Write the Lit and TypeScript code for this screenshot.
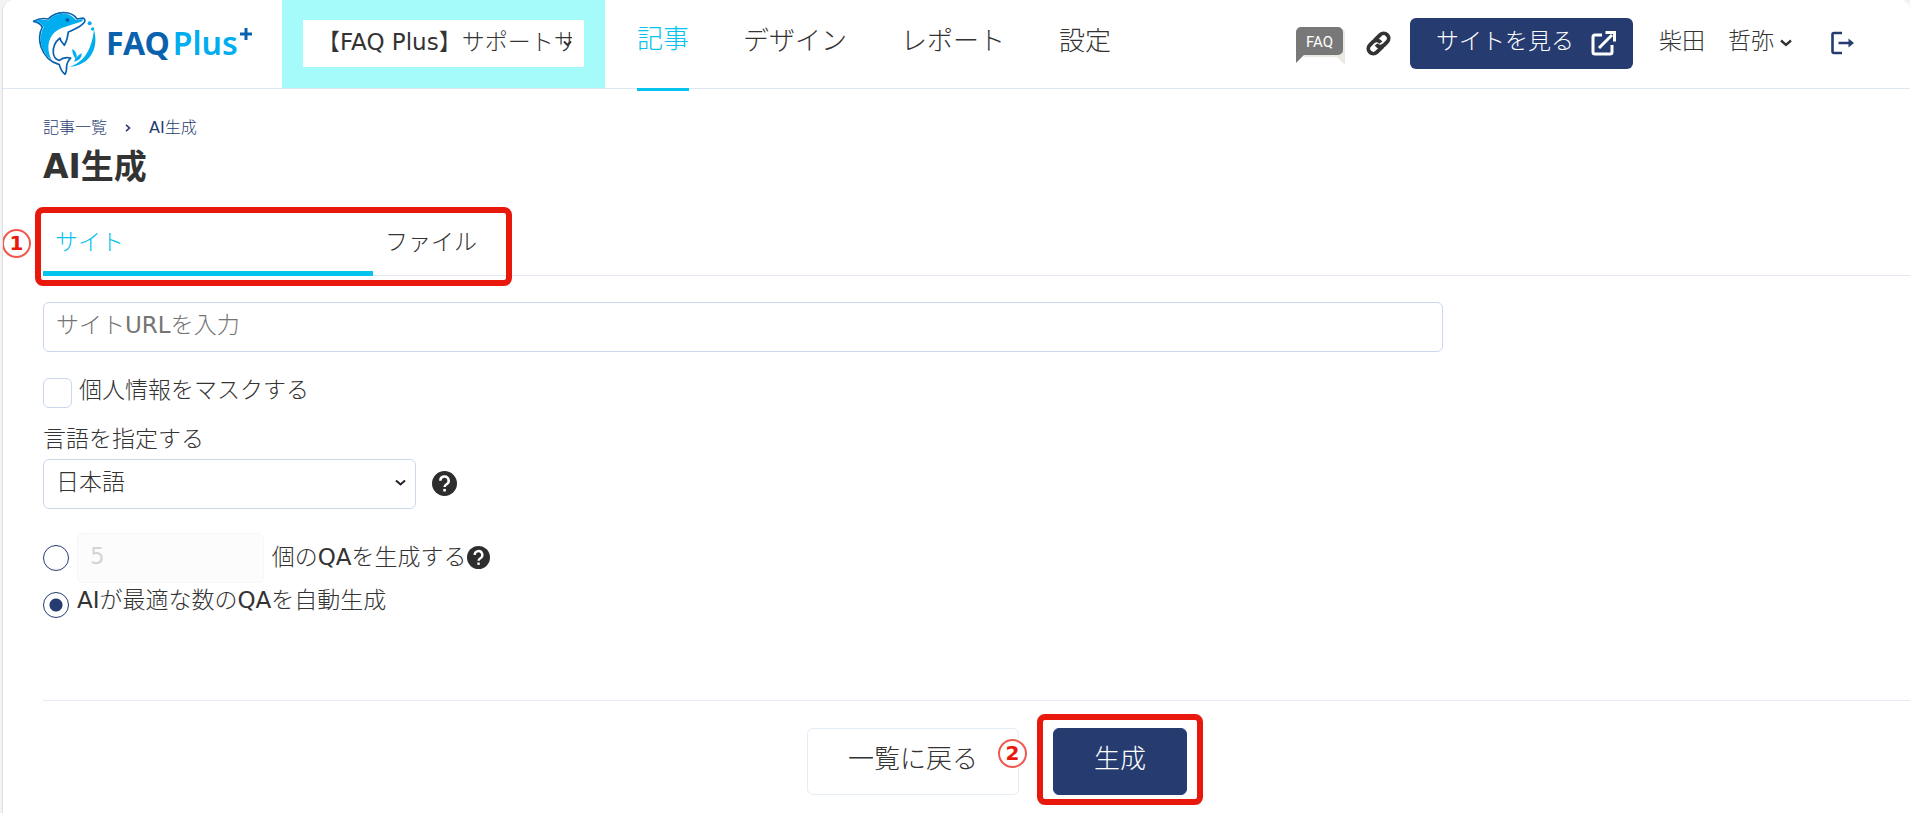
import { LitElement, html, css, svg } from "lit";
import { customElement, state } from "lit/decorators.js";

const helpIcon = svg`
  <circle cx="12" cy="12" r="12" fill="#2d2d2d" />
  <path d="M8 9.4a4 4 0 1 1 6 3.3c-1.3.8-1.9 1.300-1.900 2.600" fill="none" stroke="#fff" stroke-width="2.400" />
  <rect x="10.800" y="17.200" width="2.500" height="2.500" fill="#fff" />`;

@customElement("app-logo")
export class AppLogo extends LitElement {
  static styles = css`
    :host { display: block; }
    .logo { display: flex; align-items: center; text-decoration: none; }
    .mark { width: 68px; height: 68px; flex: none; }
    .name {
      display: flex;
      margin-left: 8px;
      font: 700 32px/44px "Noto Sans", sans-serif;
      color: #0a62ae;
    }
    .plus { margin-left: 3px; font-weight: 600; color: #00adee; }
    .sup { width: 14px; height: 14px; margin: 6px 0 0 1px; }
  `;

  render() {
    return html`
      <a class="logo" href="#" aria-label="FAQPlus+">
        <svg class="mark" viewBox="90 30 204 204" aria-hidden="true">
          <path d="M282 92C298 150 268 200 208 203C246 192 274 160 282 92Z" fill="#00adee" />
          <path d="M101 67C116 58 130 57 145 60C160 44 182 38 204 42C218 45 226 52 231 60L249 57C257 60 256 68 250 73C238 86 220 92 205 99C203 117 200 127 193 139L183 126L180 117C166 128 158 145 160 163C162 175 168 182 178 184C187 176 198 174 212 177C206 184 200 190 200 202C200 212 199 220 195 226C186 219 181 209 178 197C152 189 132 170 123 143C117 124 118 102 127 84C121 74 112 69 101 67Z"
            fill="#fff" stroke="#0a62ae" stroke-width="5" stroke-linejoin="round" />
          <path d="M106 66C121 61 133 61 146 64C160 46 184 41 204 46C216 50 222 57 228 64L246 60C251 62 249 66 243 68C224 74 205 80 187 86C160 96 145 118 145 147C146 160 149 172 155 182C137 170 129 154 124 138C120 118 122 101 131 84C125 74 117 69 106 66Z" fill="#00adee" />
          <circle cx="202" cy="63" r="6" fill="#0a62ae" />
          <circle cx="269" cy="73" r="6" fill="#00adee" />
          <circle cx="278" cy="90" r="5" fill="#00adee" />
          <path d="M217 149C230 159 233 171 227 180C220 170 216 160 217 149ZM245 163C246 176 237 186 222 188C226 176 235 169 245 163Z" fill="#00adee" />
        </svg>
        <span class="name">FAQ<span class="plus">Plus</span>
          <svg class="sup" viewBox="0 0 14 14" aria-hidden="true">
            <path d="M7 1v12M1 7h12" stroke="#0a62ae" stroke-width="3" />
          </svg>
        </span>
      </a>`;
  }
}

@customElement("app-header")
export class AppHeader extends LitElement {
  static styles = css`
    :host { display: block; }
    * { box-sizing: border-box; }
    .bar {
      display: flex;
      height: 89px;
      padding-left: 27px;
      border-bottom: 1px solid #dfe6f5;
      background: #fff;
    }
    .brand { width: 252px; padding-top: 9px; flex: none; }
    .site { flex: none; width: 323px; padding: 20px 21px; background: #a5fafa; }
    .sitefield { position: relative; }
    .siteselect {
      appearance: none;
      display: block;
      width: 100%;
      height: 47px;
      padding: 0 12px 4px 14px;
      border: 0;
      border-radius: 0;
      background: #fff;
      color: #333;
      font: inherit;
    }
    .sitearrow { position: absolute; right: 12px; top: 20px; width: 9px; height: 7px; }
    .nav { display: flex; gap: 54px; margin-left: 32px; }
    .link {
      height: 91px;
      padding-top: 19px;
      border-bottom: 3px solid transparent;
      color: #333;
      font-size: 26px;
      line-height: 44px;
      white-space: nowrap;
      text-decoration: none;
    }
    .link.active { color: #05c3ec; border-color: #05c3ec; padding-top: 17px; }
    .tools { display: flex; align-items: center; margin-left: auto; padding: 0 56px 2px 0; }
    .tool { display: block; }
    .faq { width: 49px; height: 38px; margin: 5px 21px 0 0; }
    .faq text { font: 15px Roboto, sans-serif; fill: #fff; }
    .chain { width: 25px; height: 25px; margin-right: 19px; }
    .view {
      display: flex;
      align-items: center;
      gap: 17px;
      height: 51px;
      padding: 0 17px 0 26px;
      border-radius: 6px;
      background: #263c71;
      color: #fff;
      text-decoration: none;
      white-space: nowrap;
    }
    .view span { padding-bottom: 4px; }
    .view svg { width: 25px; height: 25px; }
    .user {
      display: flex;
      align-items: center;
      gap: 6px;
      margin-left: 26px;
      padding: 0;
      border: 0;
      background: none;
      color: #333;
      font: inherit;
      white-space: nowrap;
    }
    .user span { padding-bottom: 4px; }
    .user svg { width: 12px; height: 8px; }
    .out { width: 24px; height: 24px; margin-left: 38px; }
  `;

  render() {
    const items = ["記事", "デザイン", "レポート", "設定"];
    return html`
      <header class="bar">
        <div class="brand"><app-logo></app-logo></div>
        <div class="site">
          <div class="sitefield">
            <select class="siteselect" aria-label="サイト">
              <option>【FAQ Plus】サポートサイト</option>
            </select>
            <svg class="sitearrow" viewBox="0 0 9 7" aria-hidden="true">
              <path d="M1 1.500l3.500 3.500 3.500-3.500" fill="none" stroke="#333" stroke-width="2" />
            </svg>
          </div>
        </div>
        <nav class="nav">
          ${items.map((t, i) => html`<a href="#" class="link ${i === 0 ? "active" : ""}">${t}</a>`)}
        </nav>
        <div class="tools">
          <a class="tool" href="#" aria-label="FAQ">
            <svg class="tool faq" viewBox="0 0 49 38" aria-hidden="true">
              <path d="M5 2h40a4 4 0 0 1 4 4v32l-8-8H8z" fill="#ece8e2" />
              <path d="M5 0h37a5 5 0 0 1 5 5v18a5 5 0 0 1-5 5H8l-8 8V5a5 5 0 0 1 5-5z" fill="#787878" />
              <text x="10" y="20">FAQ</text>
            </svg>
          </a>
          <a class="tool" href="#" aria-label="リンク">
            <svg class="tool chain" viewBox="0 0 25 25" aria-hidden="true">
              <g transform="rotate(-45 12.500 12.500)" fill="none" stroke="#333" stroke-width="3.800">
                <path d="M13.500 17.500H5.200a5 5 0 0 1 0-10H10a5 5 0 0 1 4.700 6" />
                <path d="M11.500 7.500h8.300a5 5 0 0 1 0 10H15a5 5 0 0 1-4.700-6" />
              </g>
            </svg>
          </a>
          <a class="view" href="#">
            <span>サイトを見る</span>
            <svg viewBox="0 0 25 25" aria-hidden="true">
              <path d="M11 4H4a2 2 0 0 0-2 2v15a2 2 0 0 0 2 2h15a2 2 0 0 0 2-2v-7M8 17L21 4" fill="none" stroke="#fff" stroke-width="3" />
              <path d="M14.500 0H25v10.500h-3V3h-7.500z" fill="#fff" />
            </svg>
          </a>
          <button class="user" type="button">
            <span>柴田　哲弥</span>
            <svg viewBox="0 0 12 8" aria-hidden="true">
              <path d="M1 1.500l5 4.500 5-4.500" fill="none" stroke="#333" stroke-width="2.400" />
            </svg>
          </button>
          <a class="tool" href="#" aria-label="ログアウト">
            <svg class="tool out" viewBox="0 0 24 24" aria-hidden="true">
              <path d="M12 2H4A1.500 1.500 0 0 0 2.500 3.500v17A1.500 1.500 0 0 0 4 22h8M8.500 12H20" fill="none" stroke="#263c71" stroke-width="2.600" />
              <path d="M18.500 7.500L24 12l-5.500 4.500z" fill="#263c71" />
            </svg>
          </a>
        </div>
      </header>`;
  }
}

@customElement("app-root")
export class AppRoot extends LitElement {
  @state() private tab = 0;

  static styles = css`
    :host {
      display: block;
      min-height: 100vh;
      background: #f3f3f4;
      color: #333;
      font: 400 23px/34px "DejaVu Sans", "Noto Sans CJK JP Light", "Noto Sans CJK JP", sans-serif;
    }
    * { box-sizing: border-box; }
    .page {
      min-height: 100vh;
      margin-left: 2px;
      border-left: 1px solid #dedee2;
      border-radius: 12px 10px 0 0;
      background: #fff;
      overflow: hidden;
    }
    .main { padding: 27px 0 0 40px; }
    .crumbs { display: flex; align-items: center; gap: 18px; font-size: 16px; line-height: 24px; }
    .crumbs a { color: #263c71; text-decoration: none; }
    .crumbs svg { width: 6px; height: 8px; }
    .title {
      margin: 6px 0 0;
      font: 700 33px/42px "DejaVu Sans", "Noto Sans CJK JP", sans-serif;
    }
    .tabs { position: relative; display: flex; margin-top: 28px; height: 60px; border-bottom: 1px solid #e2e7f3; }
    .tab {
      flex: none;
      width: 330px;
      height: 60px;
      padding: 0 12px 3px;
      border: 0;
      border-bottom: 5px solid transparent;
      background: none;
      color: #333;
      font: inherit;
      text-align: left;
    }
    .tab.active { color: #05c3ec; border-color: #05c3ec; }
    .frame { position: absolute; border: 6px solid #e8190c; border-radius: 8px; pointer-events: none; }
    .frame-tabs { left: -8px; top: -9px; width: 477px; height: 79px; }
    .frame-submit { inset: -14px -16px -10px; }
    .step {
      position: absolute;
      width: 29px;
      height: 29px;
      border: 2px solid #ee5a50;
      border-radius: 50%;
      background: #fff;
      color: #e8190c;
      font: 700 20px/25px "DejaVu Sans", sans-serif;
      text-align: center;
    }
    .step-tabs { left: -41px; top: 13px; }
    .step-submit { right: -8px; top: 11px; }
    .field {
      display: block;
      height: 50px;
      padding: 0 12px 5px;
      border: 1px solid #cad7ec;
      border-radius: 6px;
      background: #fff;
      color: #333;
      font: inherit;
    }
    .field::placeholder { color: #757575; opacity: 1; }
    .url { width: 75%; margin-top: 26px; }
    .line { display: flex; align-items: center; }
    .mask { margin-top: 21px; gap: 7px; }
    .mask label { padding-bottom: 4px; }
    .check {
      appearance: none;
      width: 29px;
      height: 30px;
      margin: 1px 0 0;
      border: 1px solid #cad7ec;
      border-radius: 6px;
    }
    .caption { display: block; margin-top: 11px; }
    .lang { margin-top: 3px; gap: 16px; }
    .select { position: relative; width: 20%; }
    .select select { appearance: none; width: 100%; }
    .select svg { position: absolute; right: 10px; top: 20px; width: 11px; height: 8px; pointer-events: none; }
    .help { display: block; padding: 0 0 2px; border: 0; background: none; }
    .help svg { display: block; width: 25px; height: 25px; }
    .help.small svg { width: 23px; height: 23px; }
    .count { margin-top: 24px; }
    .count label { padding-bottom: 2px; }
    .count .field { width: 10%; margin: 0 8px; }
    .field:disabled { background: #fcfcfc; border-color: #f6f6f6; color: #d4d4d4; }
    .radio {
      appearance: none;
      flex: none;
      width: 26px;
      height: 26px;
      margin: 0;
      border: 1px solid #263c71;
      border-radius: 50%;
    }
    .radio:checked { background: radial-gradient(circle, #263c71 6px, #fff 7px); }
    .auto { gap: 8px; }
    .auto label { padding-bottom: 8px; }
    .auto .radio { margin-top: 2px; }
    .actions {
      display: flex;
      justify-content: center;
      gap: 34px;
      margin-top: 75px;
      padding: 27px 0 0 41px;
      border-top: 1px solid #e4ebf5;
    }
    .act { position: relative; }
    .btn {
      height: 67px;
      padding: 0 40px 6px;
      border: 1px solid #e4ecf6;
      border-radius: 6px;
      background: #fff;
      color: #333;
      font: inherit;
      font-size: 26px;
    }
    .btn.primary { border-color: #263c71; background: #263c71; color: #fff; }
  `;

  render() {
    return html`
      <div class="page">
        <app-header></app-header>
        <main class="main">
          <nav class="crumbs">
            <a href="#">記事一覧</a>
            <svg viewBox="0 0 6 8" aria-hidden="true"><path d="M1 .8L4.500 4 1 7.200" fill="none" stroke="#263c71" stroke-width="1.600" /></svg>
            <a href="#">AI生成</a>
          </nav>
          <h1 class="title">AI生成</h1>

          <div class="tabs" role="tablist">
            ${["サイト", "ファイル"].map(
              (t, i) => html`<button type="button" role="tab" aria-selected=${this.tab === i}
                class="tab ${this.tab === i ? "active" : ""}" @click=${() => (this.tab = i)}>${t}</button>`
            )}
            <span class="frame frame-tabs"></span>
            <span class="step step-tabs">1</span>
          </div>

          <input class="field url" type="url" placeholder="サイトURLを入力" aria-label="サイトURL" />

          <div class="line mask">
            <input class="check" id="mask" type="checkbox" />
            <label for="mask">個人情報をマスクする</label>
          </div>

          <label class="caption" for="lang">言語を指定する</label>
          <div class="line lang">
            <div class="select">
              <select class="field" id="lang"><option>日本語</option></select>
              <svg viewBox="0 0 11 8" aria-hidden="true"><path d="M1 1.500l4.500 4 4.500-4" fill="none" stroke="#222" stroke-width="2" /></svg>
            </div>
            <button class="help" type="button" aria-label="言語のヘルプ"><svg viewBox="0 0 24 24">${helpIcon}</svg></button>
          </div>

          <div class="line count">
            <input class="radio" id="fixed" type="radio" name="mode" />
            <input class="field" type="text" value="5" disabled aria-label="QAの数" />
            <label for="fixed">個のQAを生成する</label>
            <button class="help small" type="button" aria-label="QA数のヘルプ"><svg viewBox="0 0 24 24">${helpIcon}</svg></button>
          </div>
          <div class="line auto">
            <input class="radio" id="auto" type="radio" name="mode" checked />
            <label for="auto">AIが最適な数のQAを自動生成</label>
          </div>

          <div class="actions">
            <div class="act">
              <button class="btn" type="button">一覧に戻る</button>
              <span class="step step-submit">2</span>
            </div>
            <div class="act">
              <button class="btn primary" type="button">生成</button>
              <span class="frame frame-submit"></span>
            </div>
          </div>
        </main>
      </div>`;
  }
}
